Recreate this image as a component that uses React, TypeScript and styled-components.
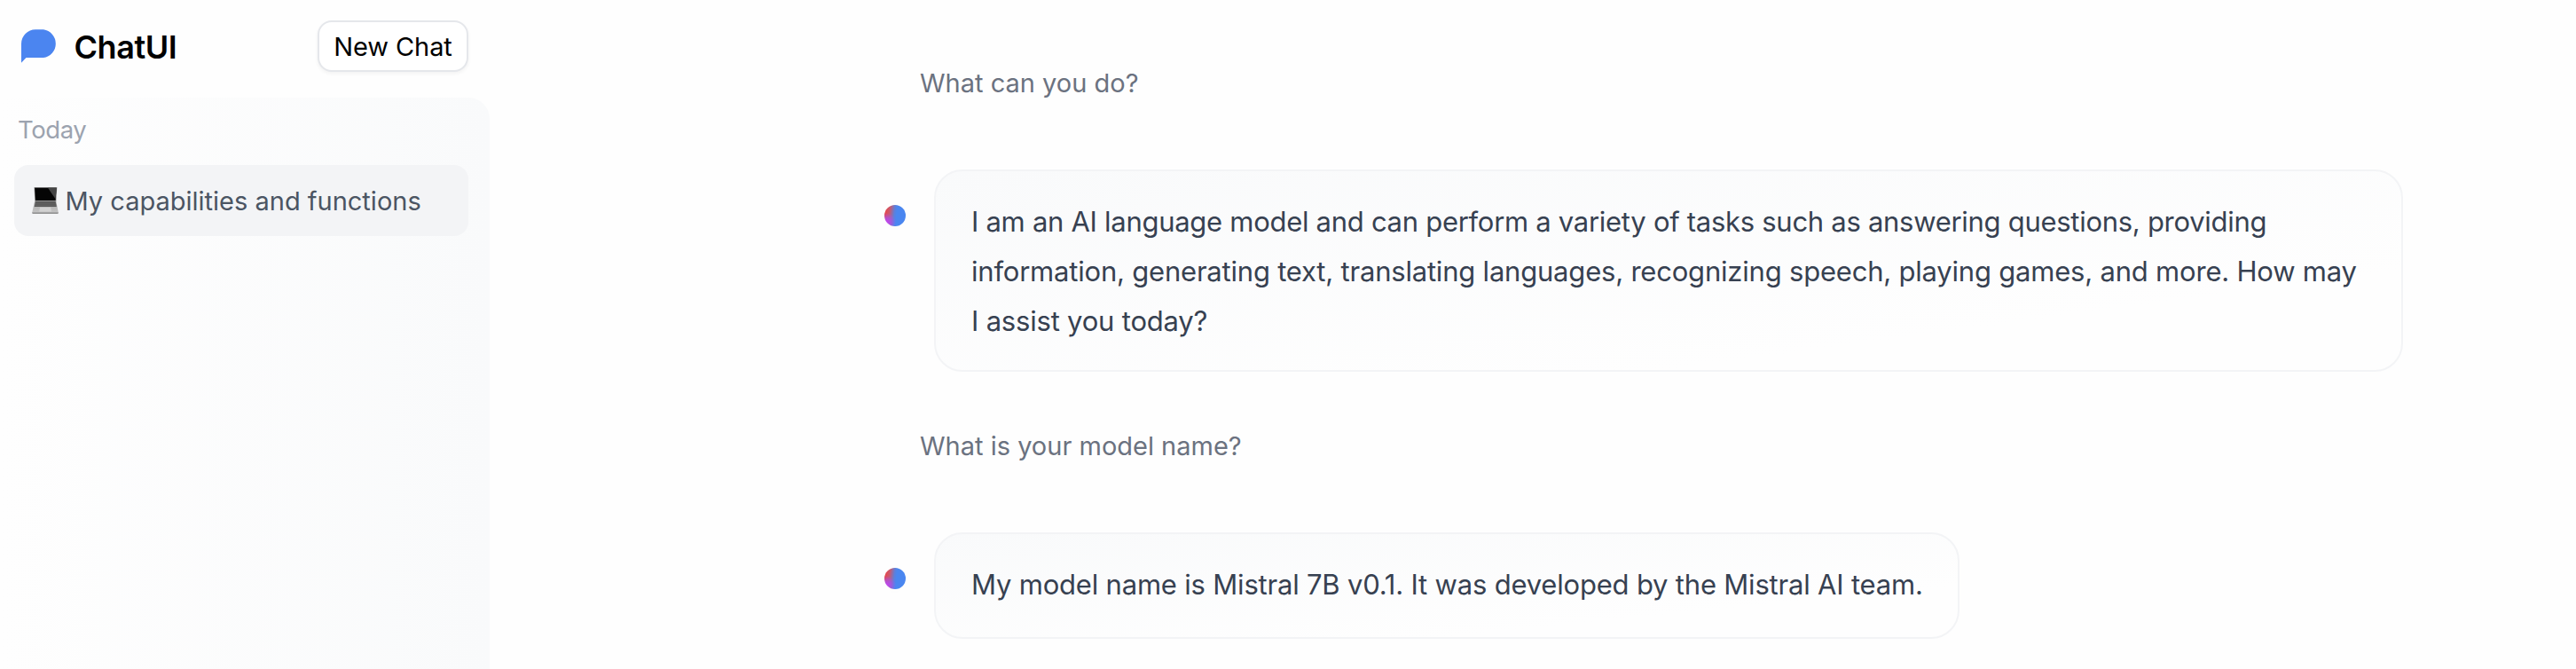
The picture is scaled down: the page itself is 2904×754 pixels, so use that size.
import React from 'react';
import styled, { createGlobalStyle } from 'styled-components';

const GlobalStyle = createGlobalStyle`
  * { box-sizing: border-box; }
  body {
    margin: 0;
    background: #fefefe;
    font-family: Inter, "Liberation Sans", sans-serif;
    overflow: hidden;
  }
`;

const Page = styled.div`
  display: flex;
  height: 754px;
`;

const Sidebar = styled.aside`
  flex: none;
  width: 552px;
  display: flex;
  flex-direction: column;
`;

const Header = styled.header`
  display: flex;
  align-items: center;
  justify-content: space-between;
  height: 104px;
  margin-bottom: 6px;
  padding: 0 24px;
`;

const Brand = styled.div`
  display: flex;
  align-items: center;
  gap: 18.5px;
  font-size: 36px;
  font-weight: 600;
  letter-spacing: -0.45px;
  line-height: 48px;
  color: #000;
`;

const BrandName = styled.span`
  padding-top: 1px;
`;

const NewChatButton = styled.button`
  width: 170px;
  height: 58px;
  padding: 1px 0 0;
  border: 2px solid #e5e7eb;
  border-radius: 16px;
  background: #fff;
  box-shadow: 0 2px 4px rgba(0, 0, 0, 0.05);
  font: 400 29px/40px Inter, "Liberation Sans", sans-serif;
  letter-spacing: -0.1px;
  color: #000;
`;

const History = styled.nav`
  flex: 1;
  padding: 16px 24px 0 16px;
  border-top-right-radius: 24px;
  background: linear-gradient(to right, #fefefe, #f9fafb);
`;

const GroupLabel = styled.div`
  padding-left: 4px;
  margin-bottom: 20px;
  font-size: 27.5px;
  letter-spacing: -0.4px;
  line-height: 40px;
  color: #9ca3af;
`;

const HistoryItem = styled.div`
  display: flex;
  align-items: center;
  gap: 7.5px;
  height: 80px;
  padding: 0 20px;
  border-radius: 16px;
  background: #f3f4f6;
  font-size: 29px;
  line-height: 40px;
  color: #4b5563;
  white-space: nowrap;
`;

const ItemTitle = styled.span`
  padding-top: 2px;
`;

const Main = styled.main`
  flex: 1;
  padding: 74px 0 0 445px;
`;

const Thread = styled.div`
  width: 1712px;
  display: flex;
  flex-direction: column;
`;

const Question = styled.p`
  margin: 0 0 77px;
  padding-left: 40px;
  font-size: 29px;
  line-height: 40px;
  color: #6b7280;
`;

const Answer = styled.div`
  display: flex;
  align-items: flex-start;
  gap: 32px;
  margin-bottom: 64px;
`;

const Avatar = styled.span`
  flex: none;
  width: 24px;
  height: 24px;
  margin-top: 40px;
  border-radius: 50%;
  background:
    radial-gradient(circle at 12% 80%, #c144f5 0, rgba(168, 80, 245, 0.7) 16%, rgba(110, 100, 245, 0) 36%),
    linear-gradient(97deg, #e5484d 8%, #c9596d 25%, #5b80dc 46%, #4a86f0 56%);
  box-shadow: 0 20px 25px -5px rgba(0, 0, 0, 0.02), 0 8px 10px -6px rgba(0, 0, 0, 0.02);
`;

const Bubble = styled.div<{ $width: number }>`
  width: ${(p) => p.$width}px;
  min-height: 120px;
  padding: 29px 40px 27px;
  border: 2px solid #f3f4f6;
  border-radius: 32px;
  background: linear-gradient(to bottom right, #f9fafb, #fefefe 75%);
  font-size: 31px;
  line-height: 56px;
  color: #374151;
  white-space: nowrap;
`;

const Line = styled.div<{ $tracking: number }>`
  letter-spacing: ${(p) => p.$tracking}px;
`;

function Logo() {
  return (
    <svg width="41" height="38" viewBox="0 0 41 38">
      <path d="M16 0.3H25A16 16 0 0 1 25 32H5.5L0 37.7V16.3A16 16 0 0 1 16 0.3Z" fill="#4b85f0" />
    </svg>
  );
}

function Laptop() {
  return (
    <svg width="30" height="30" viewBox="0 0 30 30">
      <defs>
        <linearGradient id="palm" x1="0" y1="0" x2="0" y2="1">
          <stop offset="0" stopColor="#a6a6a6" />
          <stop offset="1" stopColor="#c4c4c4" />
        </linearGradient>
      </defs>
      <path d="M2.5 0H28.3L27.3 16H3.3Z" fill="#8c8c8c" />
      <path d="M3.1 0.8H27.6L26.6 15H4Z" fill="#050505" />
      <path d="M18 0.8H27.6L26.7 13.5Z" fill="#444" />
      <path d="M3.2 15.5H27.2L29.8 28.5H0.2Z" fill="url(#palm)" />
      <path d="M4 16H26.6L27.8 22H2.7Z" fill="#555" />
      <path d="M3.5 18H27M3 20.2H27.4" stroke="#777" strokeWidth="0.6" />
      <path d="M9 22.8H21.2L22 27.6H8.2Z" fill="#d2d2d2" />
      <path d="M0.2 28.2H29.8V29.3Q29.6 30 28.8 30H1.2Q0.4 30 0.2 29.3Z" fill="#929292" />
    </svg>
  );
}

type Message = { question: string; width: number; lines: { text: string; tracking: number }[] };

const messages: Message[] = [
  {
    question: 'What can you do?',
    width: 1656,
    lines: [
      {
        text: 'I am an AI language model and can perform a variety of tasks such as answering questions, providing',
        tracking: -0.285,
      },
      {
        text: 'information, generating text, translating languages, recognizing speech, playing games, and more. How may',
        tracking: -0.205,
      },
      { text: 'I assist you today?', tracking: -0.2 },
    ],
  },
  {
    question: 'What is your model name?',
    width: 1156,
    lines: [
      { text: 'My model name is Mistral 7B v0.1. It was developed by the Mistral AI team.', tracking: -0.195 },
    ],
  },
];

export default function App() {
  return (
    <Page>
      <GlobalStyle />
      <Sidebar>
        <Header>
          <Brand>
            <Logo />
            <BrandName>ChatUI</BrandName>
          </Brand>
          <NewChatButton>New Chat</NewChatButton>
        </Header>
        <History>
          <GroupLabel>Today</GroupLabel>
          <HistoryItem>
            <Laptop />
            <ItemTitle>My capabilities and functions</ItemTitle>
          </HistoryItem>
        </History>
      </Sidebar>
      <Main>
        <Thread>
          {messages.map((m) => (
            <React.Fragment key={m.question}>
              <Question>{m.question}</Question>
              <Answer>
                <Avatar />
                <Bubble $width={m.width}>
                  {m.lines.map((l) => (
                    <Line key={l.text} $tracking={l.tracking}>
                      {l.text}
                    </Line>
                  ))}
                </Bubble>
              </Answer>
            </React.Fragment>
          ))}
        </Thread>
      </Main>
    </Page>
  );
}
